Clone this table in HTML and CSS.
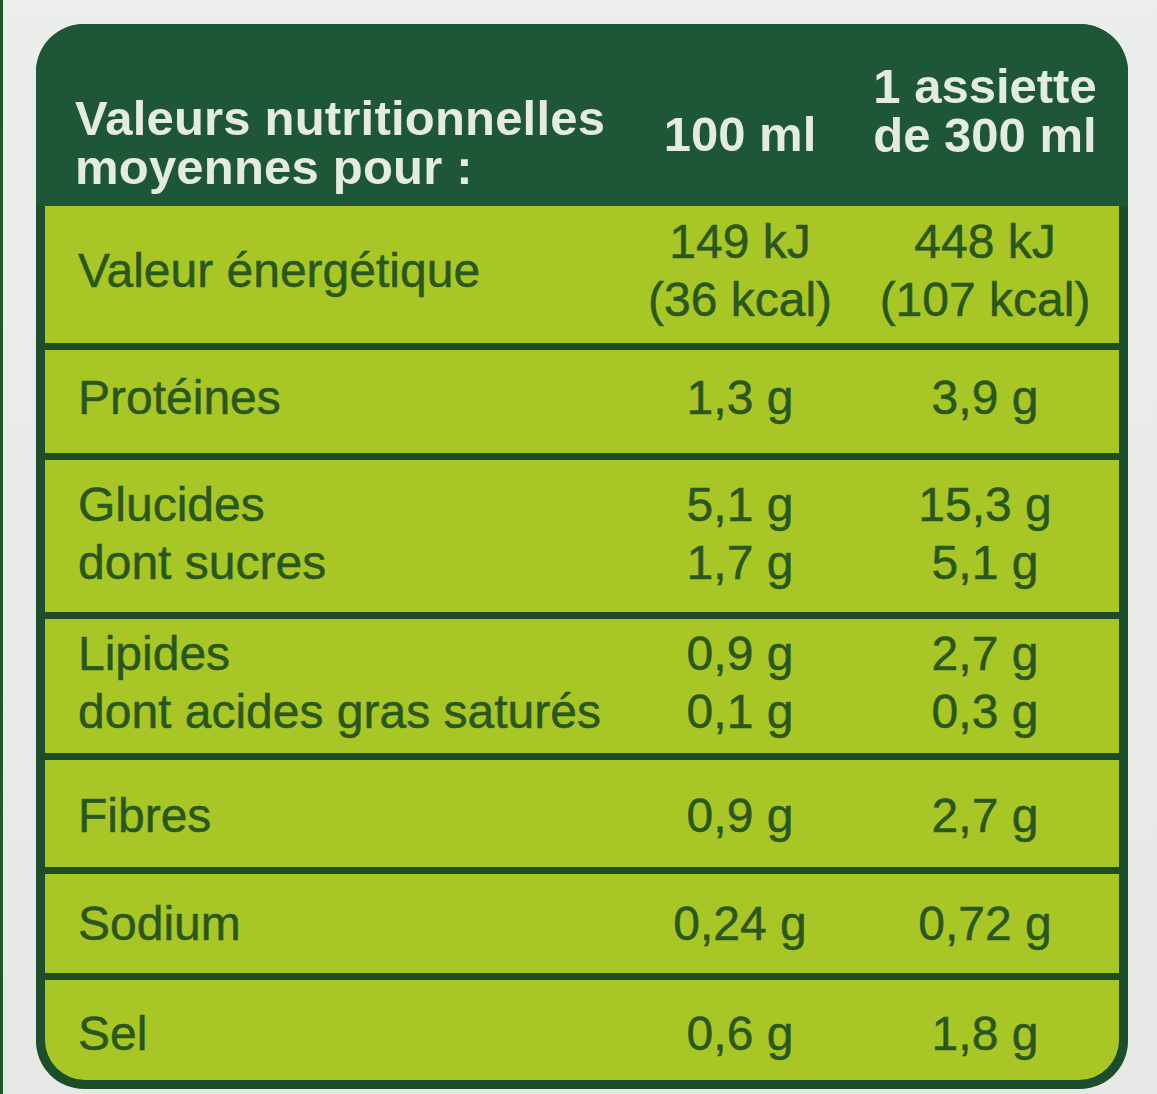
FILE: index.html
```html
<!DOCTYPE html>
<html lang="fr">
<head>
<meta charset="utf-8">
<title>Valeurs nutritionnelles</title>
<link rel="stylesheet" href="styles.css">
</head>
<body>
<div class="page">
  <section class="panel">
    <header class="head">
      <div class="head-label">Valeurs nutritionnelles<br>moyennes pour :</div>
      <div class="head-col head-col-single">100 ml</div>
      <div class="head-col">1 assiette<br>de 300 ml</div>
    </header>
    <div class="body">
      <div class="row h-energy">
        <div class="label">Valeur énergétique</div>
        <div class="val">149 kJ<br>(36 kcal)</div>
        <div class="val">448 kJ<br>(107 kcal)</div>
      </div>
      <div class="row h-prot">
        <div class="label">Protéines</div>
        <div class="val">1,3 g</div>
        <div class="val">3,9 g</div>
      </div>
      <div class="row h-gluc">
        <div class="label">Glucides<br>dont sucres</div>
        <div class="val">5,1 g<br>1,7 g</div>
        <div class="val">15,3 g<br>5,1 g</div>
      </div>
      <div class="row h-lip">
        <div class="label">Lipides<br>dont acides gras saturés</div>
        <div class="val">0,9 g<br>0,1 g</div>
        <div class="val">2,7 g<br>0,3 g</div>
      </div>
      <div class="row h-fib">
        <div class="label">Fibres</div>
        <div class="val">0,9 g</div>
        <div class="val">2,7 g</div>
      </div>
      <div class="row h-sod">
        <div class="label">Sodium</div>
        <div class="val">0,24 g</div>
        <div class="val">0,72 g</div>
      </div>
      <div class="row h-sel">
        <div class="label">Sel</div>
        <div class="val">0,6 g</div>
        <div class="val">1,8 g</div>
      </div>
    </div>
  </section>
</div>
</body>
</html>
```
FILE: styles.css
```css
html, body {
  margin: 0;
  padding: 0;
}

body {
  width: 1157px;
  height: 1094px;
  overflow: hidden;
  background: #e8eae7;
  font-family: "Liberation Sans", Arial, sans-serif;
}

.page {
  height: 1094px;
  box-sizing: border-box;
  border-left: 3px solid #25552d;
  padding: 24px 0 0 33px;
  background: linear-gradient(180deg, #eceeeb 0%, #e6e8e5 100%);
}

.panel {
  width: 1092px;
  box-sizing: border-box;
  border-radius: 48px;
  overflow: hidden;
  background: #1c4e2c;
  padding: 0 9px 9px;
}

.head {
  height: 182px;
  margin: 0 -9px;
  padding: 0 9px;
  background: #1d5737;
  color: #e4ebe3;
  font-weight: 700;
  font-size: 49px;
  line-height: 49px;
  display: grid;
  grid-template-columns: 575px 240px 250px;
  align-items: start;
}

.head-label {
  padding: 70px 0 0 30px;
  white-space: nowrap;
  letter-spacing: 0.2px;
}

.head-col {
  text-align: center;
  padding-top: 38px;
  white-space: nowrap;
}

.head-col-single {
  padding-top: 86px;
}

.body {
  background: #a8c726;
  border-radius: 0 0 40px 40px;
  overflow: hidden;
}

.row {
  box-sizing: border-box;
  display: grid;
  grid-template-columns: 575px 240px 250px;
  align-items: center;
  border-top: 7px solid #1f4b27;
  color: #2b571f;
  font-size: 48px;
  line-height: 58px;
  -webkit-text-stroke: 0.5px #2b571f;
}

.row.h-energy {
  border-top: 0;
}

.label {
  padding-left: 33px;
  white-space: nowrap;
}

.val {
  text-align: center;
  white-space: nowrap;
}

.h-energy { height: 137px; padding-bottom: 8px; }
.h-prot { height: 110px; padding-bottom: 8px; }
.h-gluc { height: 159px; padding-bottom: 4px; }
.h-lip { height: 141px; padding-bottom: 6px; }
.h-fib { height: 114px; padding-top: 4px; }
.h-sod { height: 106px; }
.h-sel { height: 107px; padding-top: 8px; }
```
